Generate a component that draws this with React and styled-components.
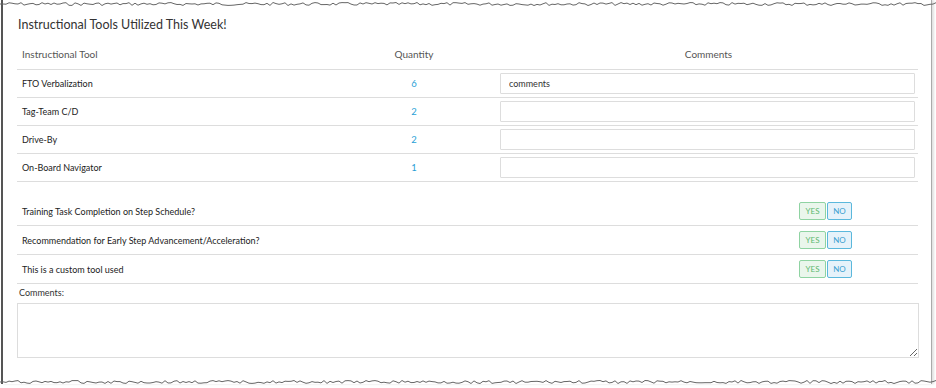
import React from 'react';
import styled, { createGlobalStyle } from 'styled-components';

const GlobalStyle = createGlobalStyle`
	html, body {
		margin: 0;
		padding: 0;
		background: #fff;
	}
	body {
		font-family: Lato, 'Open Sans', sans-serif;
		color: #333;
	}
`;

const tools = [
	{ name: 'FTO Verbalization', qty: 6, comment: 'comments' },
	{ name: 'Tag-Team C/D', qty: 2, comment: '' },
	{ name: 'Drive-By', qty: 2, comment: '' },
	{ name: 'On-Board Navigator', qty: 1, comment: '' },
];

const questions = [
	'Training Task Completion on Step Schedule?',
	'Recommendation for Early Step Advancement/Acceleration?',
	'This is a custom tool used',
];

// jagged "torn paper" edge
const tornPath = (seed) => {
	let s = seed;
	const rnd = () => {
		s = (s * 9301 + 49297) % 233280;
		return s / 233280;
	};
	let d = 'M0 3';
	for (let x = 3; x <= 936; x += 3) {
		d += ` L${x} ${(1.5 + rnd() * 3).toFixed(1)}`;
	}
	return d;
};

const TornEdge = ({ bottom, seed }) => (
	<Edge bottom={bottom} width='936' height='7' viewBox='0 0 936 7'>
		<path d={tornPath(seed)} fill='none' stroke='#666' strokeWidth='1' />
	</Edge>
);

const App = () => {
	return (
		<>
			<GlobalStyle />
			<Page>
				<TornEdge seed={7} />
				<Sheet>
					<Title>Instructional Tools Utilized This Week!</Title>
					<Table>
						<HeadRow>
							<HeadCell>Instructional Tool</HeadCell>
							<HeadCell center>Quantity</HeadCell>
							<HeadCell center>Comments</HeadCell>
						</HeadRow>
						{tools.map((tool) => (
							<Row key={tool.name}>
								<Cell>{tool.name}</Cell>
								<Qty>{tool.qty}</Qty>
								<InputCell>
									<TextInput defaultValue={tool.comment} />
								</InputCell>
							</Row>
						))}
					</Table>
					<Questions>
						{questions.map((q) => (
							<QuestionRow key={q}>
								<Cell>{q}</Cell>
								<Toggle>
									<YesNo yes>YES</YesNo>
									<YesNo>NO</YesNo>
								</Toggle>
							</QuestionRow>
						))}
					</Questions>
					<Label>Comments:</Label>
					<TextArea />
				</Sheet>
				<TornEdge bottom seed={31} />
			</Page>
		</>
	);
};

const Page = styled.div`
	position: relative;
	width: 936px;
	height: 388px;
	overflow: hidden;
`;

const Edge = styled.svg`
	position: absolute;
	left: 0;
	${(p) => (p.bottom ? 'top: 379px;' : 'top: 1px;')}
	display: block;
`;

const Sheet = styled.div`
	box-sizing: border-box;
	margin-left: 1px;
	width: 931px;
	height: 384px;
	padding: 16px 14px 0 14px;
	border-left: 2px solid #555;
	border-right: 1px solid #aaa;
	box-shadow: 2px 0 2px rgba(0, 0, 0, 0.12);
	background: #fff;
`;

const Title = styled.h3`
	margin: 0 0 0 1px;
	font-size: 12.5px;
	line-height: 18px;
	font-weight: 400;
	color: #333;
`;

const Table = styled.div`
	margin-top: 5px;
	width: 901px;
`;

const HeadRow = styled.div`
	display: grid;
	grid-template-columns: 312px 170px 1fr;
	align-items: center;
	height: 30px;
	border-bottom: 1px solid #ddd;
`;

const HeadCell = styled.div`
	padding-left: ${(p) => (p.center ? '0' : '5px')};
	text-align: ${(p) => (p.center ? 'center' : 'left')};
	font-size: 10px;
	color: #555;
`;

const Row = styled.div`
	display: grid;
	grid-template-columns: 312px 170px 1fr;
	align-items: center;
	height: 27px;
	border-bottom: 1px solid #ddd;
`;

const Cell = styled.div`
	padding-left: 5px;
	font-size: 9px;
	color: #222;
`;

const Qty = styled.div`
	text-align: center;
	font-size: 9.5px;
	color: #2a9fd6;
`;

const InputCell = styled.div`
	padding: 0 3px 0 1px;
`;

const TextInput = styled.input`
	box-sizing: border-box;
	display: block;
	width: 100%;
	height: 21px;
	margin: 0;
	padding: 0 8px;
	border: 1px solid #ddd;
	border-radius: 1px;
	font-family: inherit;
	font-size: 9px;
	color: #333;
	outline: none;
`;

const Questions = styled.div`
	margin-top: 15px;
	width: 901px;
`;

const QuestionRow = styled.div`
	display: flex;
	align-items: center;
	justify-content: space-between;
	height: 28px;
	border-bottom: 1px solid #ddd;
`;

const Toggle = styled.div`
	display: flex;
	gap: 1px;
	margin-right: 66px;
`;

const YesNo = styled.button`
	box-sizing: border-box;
	width: ${(p) => (p.yes ? '27px' : '25px')};
	height: 18px;
	padding: 0;
	border: 1px solid ${(p) => (p.yes ? '#8fd3a2' : '#5bb8dc')};
	border-radius: 2px;
	background: ${(p) => (p.yes ? '#eaf6ec' : '#e6f2fa')};
	color: ${(p) => (p.yes ? '#5cb870' : '#3a9fd0')};
	font-family: inherit;
	font-size: 8px;
	line-height: 16px;
`;

const Label = styled.div`
	margin: 2px 0 0 2px;
	font-size: 9px;
	line-height: 14px;
	color: #333;
`;

const TextArea = styled.textarea`
	box-sizing: border-box;
	display: block;
	width: 902px;
	height: 55px;
	margin-top: 3px;
	border: 1px solid #ddd;
	border-radius: 0;
	font-family: inherit;
	outline: none;
`;

export default App;
